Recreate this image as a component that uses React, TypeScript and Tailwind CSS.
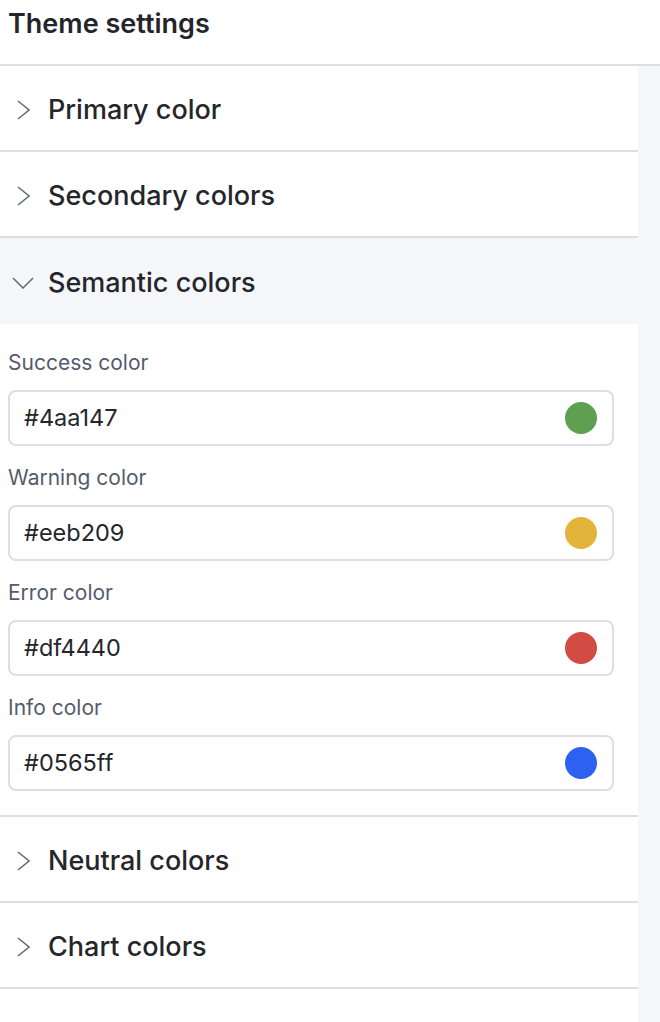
type Field = {
  label: string;
  value: string;
};

const fields: Field[] = [
  { label: 'Success color', value: '#4aa147' },
  { label: 'Warning color', value: '#eeb209' },
  { label: 'Error color', value: '#df4440' },
  { label: 'Info color', value: '#0565ff' },
];

const swatch: Record<string, string> = {
  '#4aa147': 'bg-[#5e9f51]',
  '#eeb209': 'bg-[#e4b43a]',
  '#df4440': 'bg-[#d24c44]',
  '#0565ff': 'bg-[#2d62f0]',
};

// thin chevrons, the lucide ones are too stubby here
const Chevron = ({ open }: { open?: boolean }) =>
  open ? (
    <svg width="22" height="12" viewBox="0 0 22 12" fill="none" stroke="#646978" strokeWidth="1.5">
      <polyline points="1,1 11,11 21,1" />
    </svg>
  ) : (
    <svg width="13" height="20" viewBox="0 0 13 20" fill="none" stroke="#646978" strokeWidth="1.5">
      <polyline points="1,1 12,10 1,19" />
    </svg>
  );

const SectionHeader = ({ title, open }: { title: string; open?: boolean }) => (
  <div
    className={`h-[86px] flex items-center pt-[4px] ${
      open ? 'bg-[#f5f6f9]' : 'bg-white border-b-2 border-[#dcdee6]'
    }`}
  >
    <div className={`w-[48px] flex ${open ? 'pl-[12px]' : 'pl-[17px]'}`}>
      <Chevron open={open} />
    </div>
    <span className="text-[27px] font-medium text-[#25262b]">{title}</span>
  </div>
);

const ColorField = ({ label, value }: Field) => (
  <div className="flex flex-col">
    <label className="text-[21px] leading-[24px] text-[#555b6b] mb-[15px]">{label}</label>
    <div className="h-[56px] rounded-[8px] border-2 border-[#dcdee6] bg-white flex items-center justify-between pl-[14px] pr-[15px]">
      <span className="text-[23.5px] text-[#25262b]">{value}</span>
      <span className={`w-[32px] h-[32px] rounded-full ${swatch[value]}`} />
    </div>
  </div>
);

const App = () => {
  return (
    <div className="w-[660px] h-[1022px] bg-white overflow-hidden font-['Inter',sans-serif]">
      <div className="h-[66px] border-b-2 border-[#dcdee6] px-2 pt-[7px]">
        <h1 className="text-[27px] font-semibold text-[#24252b] leading-[34px]">Theme settings</h1>
      </div>
      <div className="flex h-full">
        <div className="w-[638px] bg-white">
          <SectionHeader title="Primary color" />
          <SectionHeader title="Secondary colors" />
          <div className="border-b-2 border-[#dcdee6]">
            <SectionHeader title="Semantic colors" open />
            <div className="px-2 pt-[27px] pb-[24px] flex flex-col gap-[20px] w-[622px]">
              {fields.map((f) => (
                <ColorField key={f.label} {...f} />
              ))}
            </div>
          </div>
          <SectionHeader title="Neutral colors" />
          <SectionHeader title="Chart colors" />
        </div>
        <div className="flex-1 bg-[#f5f6f9]" />
      </div>
    </div>
  );
};

export default App;
